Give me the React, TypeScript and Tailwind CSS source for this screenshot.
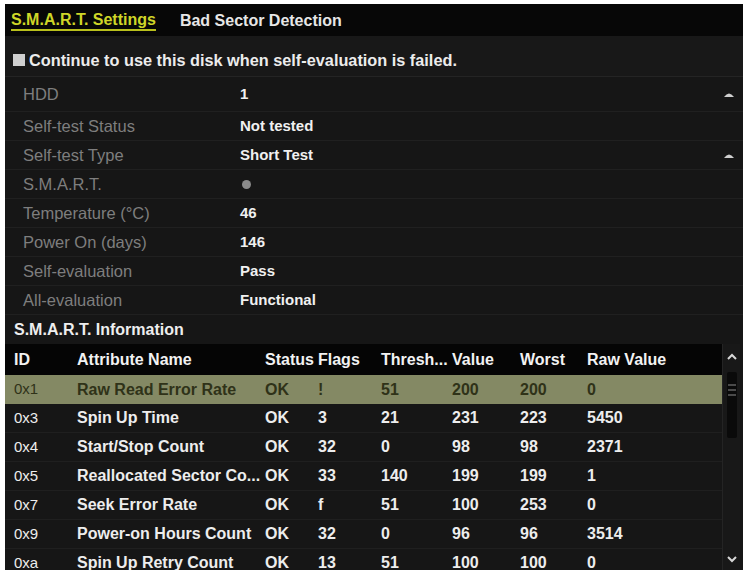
import React from "react";

const settings: { label: string; value: React.ReactNode; h: string; dd?: boolean }[] = [
  { label: "HDD", value: "1", h: "h-[35px]", dd: true },
  { label: "Self-test Status", value: "Not tested", h: "h-[29px]" },
  { label: "Self-test Type", value: "Short Test", h: "h-[29px]", dd: true },
  {
    label: "S.M.A.R.T.",
    value: <span className="inline-block w-[9px] h-[9px] rounded-full bg-[#8a8a8a] ml-[2px] mt-[2px]" />,
    h: "h-[29px]",
  },
  { label: "Temperature (°C)", value: "46", h: "h-[29px]" },
  { label: "Power On (days)", value: "146", h: "h-[29px]" },
  { label: "Self-evaluation", value: "Pass", h: "h-[29px]" },
  { label: "All-evaluation", value: "Functional", h: "h-[29px]" },
];

const rows = [
  ["0x1", "Raw Read Error Rate", "OK", "!", "51", "200", "200", "0"],
  ["0x3", "Spin Up Time", "OK", "3", "21", "231", "223", "5450"],
  ["0x4", "Start/Stop Count", "OK", "32", "0", "98", "98", "2371"],
  ["0x5", "Reallocated Sector Co...", "OK", "33", "140", "199", "199", "1"],
  ["0x7", "Seek Error Rate", "OK", "f", "51", "100", "253", "0"],
  ["0x9", "Power-on Hours Count", "OK", "32", "0", "96", "96", "3514"],
  ["0xa", "Spin Up Retry Count", "OK", "13", "51", "100", "100", "0"],
];

const cols = "grid grid-cols-[63px_188px_53px_63px_71px_68px_67px_1fr]";

function Caret({ up }: { up: boolean }) {
  return (
    <svg width="10" height="7" viewBox="0 0 10 7">
      {up ? (
        <path d="M1 6 L5 2 L9 6" stroke="#d8d8d8" strokeWidth="2" fill="none" />
      ) : (
        <path d="M1 1 L5 5 L9 1" stroke="#d8d8d8" strokeWidth="2" fill="none" />
      )}
    </svg>
  );
}

export default function App() {
  return (
    <div
      className="w-[743px] h-[570px] bg-white overflow-hidden"
      style={{ fontFamily: '"Liberation Sans", Arial, sans-serif' }}
    >
      <div className="ml-[5px] mt-[4px] w-[738px] h-[566px] bg-[#161616] flex flex-col overflow-hidden">
        {/* Tabs */}
        <div className="h-[32px] bg-[#070707] flex items-center pl-[6px] gap-[24px] shrink-0">
          <div className="text-[16px] font-bold text-[#cfd628] border-b-2 border-[#b9c01c] leading-[19px]">
            S.M.A.R.T. Settings
          </div>
          <div className="text-[16px] font-bold text-[#e6e6e6] leading-[19px]">Bad Sector Detection</div>
        </div>
        {/* Checkbox */}
        <div className="h-[41px] flex items-center pl-[8px] pt-[8px] border-b border-[#242424] shrink-0 bg-[#181818]">
          <span className="w-[12px] h-[12px] bg-[#cfcfcf] mr-[4px]" />
          <span className="text-[16.3px] font-bold text-[#ececec]">
            Continue to use this disk when self-evaluation is failed.
          </span>
        </div>
        {/* Settings */}
        {settings.map((s) => (
          <div key={s.label} className={`${s.h} flex items-center border-b border-[#202020] shrink-0 relative`}>
            <div className="w-[235px] pl-[18px] text-[16.5px] text-[#7e7e7e]">{s.label}</div>
            <div className="flex-1 text-[15px] font-bold text-[#f0f0f0]">{s.value}</div>
            {s.dd && (
              <div className="w-[22px] flex justify-center pr-[6px]">
                <svg width="12" height="6" viewBox="0 0 12 6">
                  <path d="M1 6 Q6 -1 11 6 Z" fill="#cfcfcf" />
                </svg>
              </div>
            )}
          </div>
        ))}
        {/* SMART Information */}
        <div className="h-[29px] flex items-center pl-[9px] text-[16px] font-bold text-[#eeeeee] shrink-0">
          S.M.A.R.T. Information
        </div>
        {/* Table */}
        <div className="flex flex-1 min-h-0">
          <div className="w-[717px] flex flex-col">
            <div className={`${cols} h-[31px] items-center bg-[#050505] pl-[9px] text-[16px] font-bold text-[#f2f2f2] shrink-0`}>
              <div>ID</div>
              <div>Attribute Name</div>
              <div>Status</div>
              <div>Flags</div>
              <div>Thresh...</div>
              <div>Value</div>
              <div>Worst</div>
              <div>Raw Value</div>
            </div>
            {rows.map((r, i) => (
              <div
                key={r[0]}
                className={`${cols} h-[29px] items-center pl-[9px] text-[16px] font-bold whitespace-nowrap shrink-0 ${
                  i === 0 ? "bg-[#848964] text-[#2f3218]" : "text-[#ededed] border-b border-[#1f1f1f]"
                }`}
              >
                {r.map((c, j) => (
                  <div key={j} className={j === 0 ? "font-normal text-[15px]" : ""}>
                    {c}
                  </div>
                ))}
              </div>
            ))}
          </div>
          {/* Scrollbar */}
          <div className="w-[18px] flex flex-col items-center bg-[#181818] border-l border-[#242424]">
            <div className="h-[24px] flex items-center">
              <Caret up />
            </div>
            <div className="w-[10px] h-[66px] bg-[#0a0a0a] rounded-[2px] flex flex-col justify-start pt-[12px] items-center gap-[3px] mt-[4px]">
              <div className="w-[8px] h-[2px] bg-[#4a4a4a]" />
              <div className="w-[8px] h-[2px] bg-[#4a4a4a]" />
              <div className="w-[8px] h-[2px] bg-[#4a4a4a]" />
            </div>
            <div className="flex-1" />
            <div className="h-[22px] flex items-center">
              <Caret up={false} />
            </div>
          </div>
          <div className="w-[3px]" />
        </div>
      </div>
    </div>
  );
}
